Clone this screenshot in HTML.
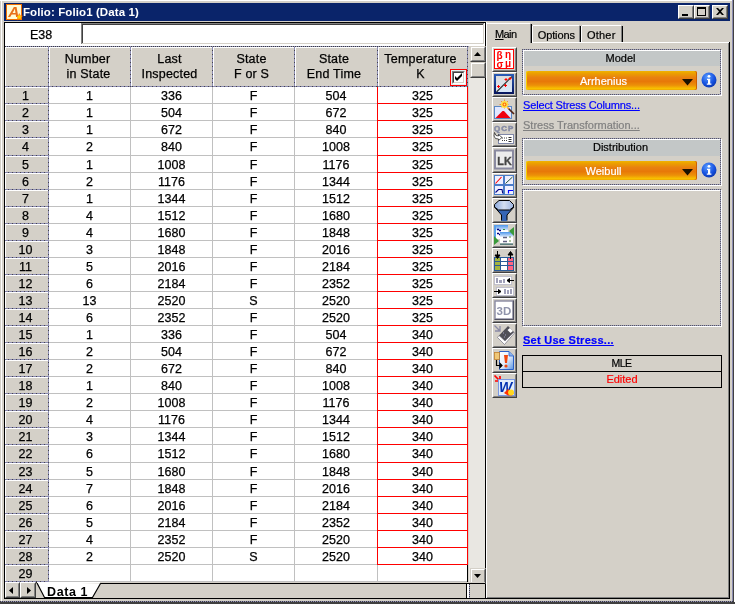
<!DOCTYPE html>
<html><head><meta charset="utf-8"><title>Folio: Folio1 (Data 1)</title>
<style>
html,body{margin:0;padding:0;background:#d4d0c8;}
body{will-change:transform;width:735px;height:604px;position:relative;overflow:hidden;font-family:"Liberation Sans",sans-serif;font-size:12px;color:#000;}
.a{position:absolute;}
.t{position:absolute;white-space:nowrap;text-align:center;}
.g{-webkit-text-stroke:.25px #000;font-size:12.500px;line-height:17px;height:17px;}
.p{font-size:11px;line-height:13px;-webkit-text-stroke-width:.2px}
.h{font-size:12.500px;letter-spacing:.2px}
.btn{position:absolute;width:25px;height:25px;box-sizing:border-box;border:1px solid;border-color:#fff #404040 #404040 #fff;background:#d4d0c8;}
.btn i{position:absolute;left:0;top:0;right:0;bottom:0;border:1px solid;border-color:#d4d0c8 #808080 #808080 #d4d0c8;}
svg{position:absolute;overflow:visible;}
.dh{background:repeating-linear-gradient(90deg,#3c3c44 0,#3c3c44 1px,#9696b8 1px,#9696b8 2px)}
.dh3{background:repeating-linear-gradient(90deg,#585862 0,#585862 1px,#9c9cbc 1px,#9c9cbc 2px)}
.dv3{background:repeating-linear-gradient(180deg,#585862 0,#585862 1px,#9c9cbc 1px,#9c9cbc 2px)}
.dh2{background:repeating-linear-gradient(90deg,#8c8cb2 0,#8c8cb2 3px,#44444c 3px,#44444c 4px)}
.dv2{background:repeating-linear-gradient(180deg,#8c8cb2 0,#8c8cb2 3px,#44444c 3px,#44444c 4px)}
.dv{background:repeating-linear-gradient(180deg,#3c3c44 0,#3c3c44 1px,#9696b8 1px,#9696b8 2px)}
</style></head><body>

<div class="a" style="left:0px;top:0px;width:735px;height:604px;background:#d4d0c8;"></div>
<div class="a" style="left:0px;top:0px;width:735px;height:1px;background:#fff;"></div>
<div class="a" style="left:1px;top:0px;width:1px;height:601px;background:#fff;"></div>
<div class="a" style="left:732px;top:0px;width:1px;height:604px;background:#8c8cb2;"></div>
<div class="a" style="left:733px;top:0px;width:1px;height:604px;background:#404040;"></div>
<div class="a" style="left:734px;top:0px;width:1px;height:602px;background:#fff;"></div>
<div class="a dh" style="left:0px;top:601px;width:733px;height:1px;"></div>
<div class="a" style="left:0px;top:602px;width:735px;height:2px;background:#404040;"></div>
<div class="a" style="left:4px;top:3px;width:726px;height:18px;background:#0a246a;"></div>
<svg style="left:6px;top:4px" width="16" height="16" viewBox="0 0 16 16"><rect x="0.500" y="0.500" width="15" height="15" fill="#fffbd6" stroke="#f07000"/><text x="2.200" y="12.800" font-family="Liberation Sans,sans-serif" font-weight="bold" font-style="italic" font-size="15.500" fill="#e8701a">A</text><path d="M13.300 9.600l1 2.100 2.200.3-1.600 1.600.4 2.300-2-1.100-2 1.100.4-2.300-1.600-1.600 2.200-.3z" fill="#ffd000" stroke="#f05000" stroke-width=".5"/></svg>
<div class="t" style="left:23px;top:4px;text-align:left;font-weight:bold;font-size:11.500px;line-height:16px;color:#fff;letter-spacing:.1px" id="title">Folio: Folio1 (Data 1)</div>
<div class="a" style="left:678px;top:5px;width:16px;height:14px;box-sizing:border-box;background:#d4d0c8;border:1px solid;border-color:#fff #404040 #404040 #fff"><div class="a" style="left:0;top:0;right:0;bottom:0;border:1px solid;border-color:#d4d0c8 #808080 #808080 #d4d0c8"></div><div class="a" style="left:3px;top:8px;width:6px;height:2px;background:#000"></div></div>
<div class="a" style="left:694px;top:5px;width:16px;height:14px;box-sizing:border-box;background:#d4d0c8;border:1px solid;border-color:#fff #404040 #404040 #fff"><div class="a" style="left:0;top:0;right:0;bottom:0;border:1px solid;border-color:#d4d0c8 #808080 #808080 #d4d0c8"></div><div class="a" style="left:2px;top:1px;width:9px;height:9px;box-sizing:border-box;border:1px solid #000;border-top-width:2px"></div></div>
<div class="a" style="left:712px;top:5px;width:16px;height:14px;box-sizing:border-box;background:#d4d0c8;border:1px solid;border-color:#fff #404040 #404040 #fff"><div class="a" style="left:0;top:0;right:0;bottom:0;border:1px solid;border-color:#d4d0c8 #808080 #808080 #d4d0c8"></div><svg style="left:3px;top:2px" width="8" height="7" viewBox="0 0 8 7"><path d="M0 0h2l2 2 2-2h2L5 3.500 8 7H6L4 5 2 7H0l3-3.500z" fill="#000"/></svg></div>
<div class="a" style="left:4px;top:22px;width:482px;height:1px;background:#000;"></div>
<div class="a" style="left:4px;top:22px;width:1px;height:577px;background:#000;"></div>
<div class="a" style="left:485px;top:22px;width:1px;height:577px;background:#000;"></div>
<div class="a" style="left:4px;top:598px;width:726px;height:1px;background:#000;"></div>
<div class="a" style="left:729px;top:42px;width:1px;height:557px;background:#000;"></div>
<div class="a" style="left:728px;top:43px;width:1px;height:555px;background:#808080;"></div>
<div class="a" style="left:486px;top:597px;width:243px;height:1px;background:#808080;"></div>
<div class="a" style="left:486px;top:22px;width:1px;height:576px;background:#fff;"></div>
<div class="a" style="left:5px;top:23px;width:76px;height:22px;background:#fff;"></div>
<div class="t g" style="left:3px;top:27px;width:76px;font-size:12.500px">E38</div>
<div class="a" style="left:81px;top:23px;width:404px;height:22px;background:#fff;"></div>
<div class="a" style="left:81px;top:23px;width:403px;height:1px;background:#808080;"></div>
<div class="a" style="left:81px;top:23px;width:1px;height:21px;background:#808080;"></div>
<div class="a" style="left:82px;top:24px;width:401px;height:1px;background:#404040;"></div>
<div class="a" style="left:82px;top:24px;width:1px;height:19px;background:#404040;"></div>
<div class="a" style="left:82px;top:43px;width:402px;height:1px;background:#d4d0c8;"></div>
<div class="a" style="left:483px;top:24px;width:1px;height:20px;background:#d4d0c8;"></div>
<div class="a" style="left:5px;top:45px;width:480px;height:1px;background:#fff;"></div>
<div class="a" style="left:5px;top:46px;width:462px;height:536px;background:#fff;"></div>
<div class="a" style="left:5px;top:46px;width:465px;height:41px;background:#d4d0c8;"></div>
<div class="a dh" style="left:5px;top:46px;width:465px;height:1px;"></div>
<div class="a dh2" style="left:5px;top:86px;width:463px;height:1px;"></div>
<div class="a" style="left:5px;top:47px;width:43px;height:1px;background:#fff;"></div>
<div class="a" style="left:5px;top:47px;width:1px;height:39px;background:#fff;"></div>
<div class="a dv2" style="left:48px;top:47px;width:1px;height:40px;"></div>
<div class="a" style="left:49px;top:47px;width:81px;height:1px;background:#fff;"></div>
<div class="a" style="left:49px;top:47px;width:1px;height:39px;background:#fff;"></div>
<div class="a dv2" style="left:130px;top:47px;width:1px;height:40px;"></div>
<div class="a" style="left:131px;top:47px;width:81px;height:1px;background:#fff;"></div>
<div class="a" style="left:131px;top:47px;width:1px;height:39px;background:#fff;"></div>
<div class="a dv2" style="left:212px;top:47px;width:1px;height:40px;"></div>
<div class="a" style="left:213px;top:47px;width:81px;height:1px;background:#fff;"></div>
<div class="a" style="left:213px;top:47px;width:1px;height:39px;background:#fff;"></div>
<div class="a dv2" style="left:294px;top:47px;width:1px;height:40px;"></div>
<div class="a" style="left:295px;top:47px;width:82px;height:1px;background:#fff;"></div>
<div class="a" style="left:295px;top:47px;width:1px;height:39px;background:#fff;"></div>
<div class="a dv2" style="left:377px;top:47px;width:1px;height:40px;"></div>
<div class="a" style="left:378px;top:47px;width:89px;height:1px;background:#fff;"></div>
<div class="a" style="left:378px;top:47px;width:1px;height:39px;background:#fff;"></div>
<div class="a dv2" style="left:467px;top:47px;width:1px;height:40px;"></div>
<div class="a" style="left:5px;top:87px;width:43px;height:494px;background:#d4d0c8;"></div>
<div class="a dv2" style="left:48px;top:87px;width:1px;height:495px;"></div>
<div class="a" style="left:5px;top:87px;width:43px;height:1px;background:#fff;"></div>
<div class="a" style="left:5px;top:87px;width:1px;height:16px;background:#fff;"></div>
<div class="a dh2" style="left:5px;top:103px;width:43px;height:1px;"></div>
<div class="a" style="left:5px;top:104px;width:43px;height:1px;background:#fff;"></div>
<div class="a" style="left:5px;top:104px;width:1px;height:16px;background:#fff;"></div>
<div class="a dh2" style="left:5px;top:120px;width:43px;height:1px;"></div>
<div class="a" style="left:5px;top:121px;width:43px;height:1px;background:#fff;"></div>
<div class="a" style="left:5px;top:121px;width:1px;height:16px;background:#fff;"></div>
<div class="a dh2" style="left:5px;top:137px;width:43px;height:1px;"></div>
<div class="a" style="left:5px;top:138px;width:43px;height:1px;background:#fff;"></div>
<div class="a" style="left:5px;top:138px;width:1px;height:17px;background:#fff;"></div>
<div class="a dh2" style="left:5px;top:155px;width:43px;height:1px;"></div>
<div class="a" style="left:5px;top:156px;width:43px;height:1px;background:#fff;"></div>
<div class="a" style="left:5px;top:156px;width:1px;height:16px;background:#fff;"></div>
<div class="a dh2" style="left:5px;top:172px;width:43px;height:1px;"></div>
<div class="a" style="left:5px;top:173px;width:43px;height:1px;background:#fff;"></div>
<div class="a" style="left:5px;top:173px;width:1px;height:16px;background:#fff;"></div>
<div class="a dh2" style="left:5px;top:189px;width:43px;height:1px;"></div>
<div class="a" style="left:5px;top:190px;width:43px;height:1px;background:#fff;"></div>
<div class="a" style="left:5px;top:190px;width:1px;height:16px;background:#fff;"></div>
<div class="a dh2" style="left:5px;top:206px;width:43px;height:1px;"></div>
<div class="a" style="left:5px;top:207px;width:43px;height:1px;background:#fff;"></div>
<div class="a" style="left:5px;top:207px;width:1px;height:16px;background:#fff;"></div>
<div class="a dh2" style="left:5px;top:223px;width:43px;height:1px;"></div>
<div class="a" style="left:5px;top:224px;width:43px;height:1px;background:#fff;"></div>
<div class="a" style="left:5px;top:224px;width:1px;height:16px;background:#fff;"></div>
<div class="a dh2" style="left:5px;top:240px;width:43px;height:1px;"></div>
<div class="a" style="left:5px;top:241px;width:43px;height:1px;background:#fff;"></div>
<div class="a" style="left:5px;top:241px;width:1px;height:16px;background:#fff;"></div>
<div class="a dh2" style="left:5px;top:257px;width:43px;height:1px;"></div>
<div class="a" style="left:5px;top:258px;width:43px;height:1px;background:#fff;"></div>
<div class="a" style="left:5px;top:258px;width:1px;height:16px;background:#fff;"></div>
<div class="a dh2" style="left:5px;top:274px;width:43px;height:1px;"></div>
<div class="a" style="left:5px;top:275px;width:43px;height:1px;background:#fff;"></div>
<div class="a" style="left:5px;top:275px;width:1px;height:16px;background:#fff;"></div>
<div class="a dh2" style="left:5px;top:291px;width:43px;height:1px;"></div>
<div class="a" style="left:5px;top:292px;width:43px;height:1px;background:#fff;"></div>
<div class="a" style="left:5px;top:292px;width:1px;height:16px;background:#fff;"></div>
<div class="a dh2" style="left:5px;top:308px;width:43px;height:1px;"></div>
<div class="a" style="left:5px;top:309px;width:43px;height:1px;background:#fff;"></div>
<div class="a" style="left:5px;top:309px;width:1px;height:16px;background:#fff;"></div>
<div class="a dh2" style="left:5px;top:325px;width:43px;height:1px;"></div>
<div class="a" style="left:5px;top:326px;width:43px;height:1px;background:#fff;"></div>
<div class="a" style="left:5px;top:326px;width:1px;height:16px;background:#fff;"></div>
<div class="a dh2" style="left:5px;top:342px;width:43px;height:1px;"></div>
<div class="a" style="left:5px;top:343px;width:43px;height:1px;background:#fff;"></div>
<div class="a" style="left:5px;top:343px;width:1px;height:16px;background:#fff;"></div>
<div class="a dh2" style="left:5px;top:359px;width:43px;height:1px;"></div>
<div class="a" style="left:5px;top:360px;width:43px;height:1px;background:#fff;"></div>
<div class="a" style="left:5px;top:360px;width:1px;height:16px;background:#fff;"></div>
<div class="a dh2" style="left:5px;top:376px;width:43px;height:1px;"></div>
<div class="a" style="left:5px;top:377px;width:43px;height:1px;background:#fff;"></div>
<div class="a" style="left:5px;top:377px;width:1px;height:16px;background:#fff;"></div>
<div class="a dh2" style="left:5px;top:393px;width:43px;height:1px;"></div>
<div class="a" style="left:5px;top:394px;width:43px;height:1px;background:#fff;"></div>
<div class="a" style="left:5px;top:394px;width:1px;height:16px;background:#fff;"></div>
<div class="a dh2" style="left:5px;top:410px;width:43px;height:1px;"></div>
<div class="a" style="left:5px;top:411px;width:43px;height:1px;background:#fff;"></div>
<div class="a" style="left:5px;top:411px;width:1px;height:16px;background:#fff;"></div>
<div class="a dh2" style="left:5px;top:427px;width:43px;height:1px;"></div>
<div class="a" style="left:5px;top:428px;width:43px;height:1px;background:#fff;"></div>
<div class="a" style="left:5px;top:428px;width:1px;height:16px;background:#fff;"></div>
<div class="a dh2" style="left:5px;top:444px;width:43px;height:1px;"></div>
<div class="a" style="left:5px;top:445px;width:43px;height:1px;background:#fff;"></div>
<div class="a" style="left:5px;top:445px;width:1px;height:17px;background:#fff;"></div>
<div class="a dh2" style="left:5px;top:462px;width:43px;height:1px;"></div>
<div class="a" style="left:5px;top:463px;width:43px;height:1px;background:#fff;"></div>
<div class="a" style="left:5px;top:463px;width:1px;height:16px;background:#fff;"></div>
<div class="a dh2" style="left:5px;top:479px;width:43px;height:1px;"></div>
<div class="a" style="left:5px;top:480px;width:43px;height:1px;background:#fff;"></div>
<div class="a" style="left:5px;top:480px;width:1px;height:16px;background:#fff;"></div>
<div class="a dh2" style="left:5px;top:496px;width:43px;height:1px;"></div>
<div class="a" style="left:5px;top:497px;width:43px;height:1px;background:#fff;"></div>
<div class="a" style="left:5px;top:497px;width:1px;height:16px;background:#fff;"></div>
<div class="a dh2" style="left:5px;top:513px;width:43px;height:1px;"></div>
<div class="a" style="left:5px;top:514px;width:43px;height:1px;background:#fff;"></div>
<div class="a" style="left:5px;top:514px;width:1px;height:16px;background:#fff;"></div>
<div class="a dh2" style="left:5px;top:530px;width:43px;height:1px;"></div>
<div class="a" style="left:5px;top:531px;width:43px;height:1px;background:#fff;"></div>
<div class="a" style="left:5px;top:531px;width:1px;height:16px;background:#fff;"></div>
<div class="a dh2" style="left:5px;top:547px;width:43px;height:1px;"></div>
<div class="a" style="left:5px;top:548px;width:43px;height:1px;background:#fff;"></div>
<div class="a" style="left:5px;top:548px;width:1px;height:16px;background:#fff;"></div>
<div class="a dh2" style="left:5px;top:564px;width:43px;height:1px;"></div>
<div class="a" style="left:5px;top:565px;width:43px;height:1px;background:#fff;"></div>
<div class="a" style="left:5px;top:565px;width:1px;height:16px;background:#fff;"></div>
<div class="a dh2" style="left:5px;top:581px;width:43px;height:1px;"></div>
<div class="a" style="left:49px;top:103px;width:418px;height:1px;background:#c0c0c0;"></div>
<div class="a" style="left:49px;top:120px;width:418px;height:1px;background:#c0c0c0;"></div>
<div class="a" style="left:49px;top:137px;width:418px;height:1px;background:#c0c0c0;"></div>
<div class="a" style="left:49px;top:155px;width:418px;height:1px;background:#c0c0c0;"></div>
<div class="a" style="left:49px;top:172px;width:418px;height:1px;background:#c0c0c0;"></div>
<div class="a" style="left:49px;top:189px;width:418px;height:1px;background:#c0c0c0;"></div>
<div class="a" style="left:49px;top:206px;width:418px;height:1px;background:#c0c0c0;"></div>
<div class="a" style="left:49px;top:223px;width:418px;height:1px;background:#c0c0c0;"></div>
<div class="a" style="left:49px;top:240px;width:418px;height:1px;background:#c0c0c0;"></div>
<div class="a" style="left:49px;top:257px;width:418px;height:1px;background:#c0c0c0;"></div>
<div class="a" style="left:49px;top:274px;width:418px;height:1px;background:#c0c0c0;"></div>
<div class="a" style="left:49px;top:291px;width:418px;height:1px;background:#c0c0c0;"></div>
<div class="a" style="left:49px;top:308px;width:418px;height:1px;background:#c0c0c0;"></div>
<div class="a" style="left:49px;top:325px;width:418px;height:1px;background:#c0c0c0;"></div>
<div class="a" style="left:49px;top:342px;width:418px;height:1px;background:#c0c0c0;"></div>
<div class="a" style="left:49px;top:359px;width:418px;height:1px;background:#c0c0c0;"></div>
<div class="a" style="left:49px;top:376px;width:418px;height:1px;background:#c0c0c0;"></div>
<div class="a" style="left:49px;top:393px;width:418px;height:1px;background:#c0c0c0;"></div>
<div class="a" style="left:49px;top:410px;width:418px;height:1px;background:#c0c0c0;"></div>
<div class="a" style="left:49px;top:427px;width:418px;height:1px;background:#c0c0c0;"></div>
<div class="a" style="left:49px;top:444px;width:418px;height:1px;background:#c0c0c0;"></div>
<div class="a" style="left:49px;top:462px;width:418px;height:1px;background:#c0c0c0;"></div>
<div class="a" style="left:49px;top:479px;width:418px;height:1px;background:#c0c0c0;"></div>
<div class="a" style="left:49px;top:496px;width:418px;height:1px;background:#c0c0c0;"></div>
<div class="a" style="left:49px;top:513px;width:418px;height:1px;background:#c0c0c0;"></div>
<div class="a" style="left:49px;top:530px;width:418px;height:1px;background:#c0c0c0;"></div>
<div class="a" style="left:49px;top:547px;width:418px;height:1px;background:#c0c0c0;"></div>
<div class="a" style="left:49px;top:564px;width:418px;height:1px;background:#c0c0c0;"></div>
<div class="a" style="left:49px;top:581px;width:418px;height:1px;background:#c0c0c0;"></div>
<div class="a" style="left:130px;top:87px;width:1px;height:494px;background:#c0c0c0;"></div>
<div class="a" style="left:212px;top:87px;width:1px;height:494px;background:#c0c0c0;"></div>
<div class="a" style="left:294px;top:87px;width:1px;height:494px;background:#c0c0c0;"></div>
<div class="a" style="left:377px;top:565px;width:1px;height:17px;background:#c0c0c0;"></div>
<div class="a" style="left:467px;top:565px;width:1px;height:19px;background:#000;"></div>
<div class="a" style="left:377px;top:87px;width:1px;height:478px;background:#f00;"></div>
<div class="a" style="left:467px;top:87px;width:1px;height:478px;background:#f00;"></div>
<div class="a" style="left:377px;top:103px;width:91px;height:1px;background:#f00;"></div>
<div class="a" style="left:377px;top:120px;width:91px;height:1px;background:#f00;"></div>
<div class="a" style="left:377px;top:137px;width:91px;height:1px;background:#f00;"></div>
<div class="a" style="left:377px;top:155px;width:91px;height:1px;background:#f00;"></div>
<div class="a" style="left:377px;top:172px;width:91px;height:1px;background:#f00;"></div>
<div class="a" style="left:377px;top:189px;width:91px;height:1px;background:#f00;"></div>
<div class="a" style="left:377px;top:206px;width:91px;height:1px;background:#f00;"></div>
<div class="a" style="left:377px;top:223px;width:91px;height:1px;background:#f00;"></div>
<div class="a" style="left:377px;top:240px;width:91px;height:1px;background:#f00;"></div>
<div class="a" style="left:377px;top:257px;width:91px;height:1px;background:#f00;"></div>
<div class="a" style="left:377px;top:274px;width:91px;height:1px;background:#f00;"></div>
<div class="a" style="left:377px;top:291px;width:91px;height:1px;background:#f00;"></div>
<div class="a" style="left:377px;top:308px;width:91px;height:1px;background:#f00;"></div>
<div class="a" style="left:377px;top:325px;width:91px;height:1px;background:#f00;"></div>
<div class="a" style="left:377px;top:342px;width:91px;height:1px;background:#f00;"></div>
<div class="a" style="left:377px;top:359px;width:91px;height:1px;background:#f00;"></div>
<div class="a" style="left:377px;top:376px;width:91px;height:1px;background:#f00;"></div>
<div class="a" style="left:377px;top:393px;width:91px;height:1px;background:#f00;"></div>
<div class="a" style="left:377px;top:410px;width:91px;height:1px;background:#f00;"></div>
<div class="a" style="left:377px;top:427px;width:91px;height:1px;background:#f00;"></div>
<div class="a" style="left:377px;top:444px;width:91px;height:1px;background:#f00;"></div>
<div class="a" style="left:377px;top:462px;width:91px;height:1px;background:#f00;"></div>
<div class="a" style="left:377px;top:479px;width:91px;height:1px;background:#f00;"></div>
<div class="a" style="left:377px;top:496px;width:91px;height:1px;background:#f00;"></div>
<div class="a" style="left:377px;top:513px;width:91px;height:1px;background:#f00;"></div>
<div class="a" style="left:377px;top:530px;width:91px;height:1px;background:#f00;"></div>
<div class="a" style="left:377px;top:547px;width:91px;height:1px;background:#f00;"></div>
<div class="a" style="left:377px;top:564px;width:91px;height:1px;background:#f00;"></div>
<div class="t g h" style="left:47px;top:51px;width:81px;">Number</div>
<div class="t g h" style="left:48px;top:66px;width:81px;">in State</div>
<div class="t g h" style="left:129px;top:51px;width:81px;">Last</div>
<div class="t g h" style="left:129px;top:66px;width:81px;">Inspected</div>
<div class="t g h" style="left:211px;top:51px;width:81px;">State</div>
<div class="t g h" style="left:211px;top:66px;width:81px;">F or S</div>
<div class="t g h" style="left:293px;top:51px;width:82px;">State</div>
<div class="t g h" style="left:293px;top:66px;width:82px;">End Time</div>
<div class="t g h" style="left:376px;top:51px;width:89px;">Temperature</div>
<div class="t g h" style="left:376px;top:66px;width:89px;">K</div>
<div class="t g" style="left:4px;top:88px;width:43px;">1</div>
<div class="t g" style="left:49px;top:88px;width:81px;">1</div>
<div class="t g" style="left:131px;top:88px;width:81px;">336</div>
<div class="t g" style="left:213px;top:88px;width:81px;">F</div>
<div class="t g" style="left:295px;top:88px;width:82px;">504</div>
<div class="t g" style="left:378px;top:88px;width:89px;">325</div>
<div class="t g" style="left:4px;top:105px;width:43px;">2</div>
<div class="t g" style="left:49px;top:105px;width:81px;">1</div>
<div class="t g" style="left:131px;top:105px;width:81px;">504</div>
<div class="t g" style="left:213px;top:105px;width:81px;">F</div>
<div class="t g" style="left:295px;top:105px;width:82px;">672</div>
<div class="t g" style="left:378px;top:105px;width:89px;">325</div>
<div class="t g" style="left:4px;top:122px;width:43px;">3</div>
<div class="t g" style="left:49px;top:122px;width:81px;">1</div>
<div class="t g" style="left:131px;top:122px;width:81px;">672</div>
<div class="t g" style="left:213px;top:122px;width:81px;">F</div>
<div class="t g" style="left:295px;top:122px;width:82px;">840</div>
<div class="t g" style="left:378px;top:122px;width:89px;">325</div>
<div class="t g" style="left:4px;top:139px;width:43px;">4</div>
<div class="t g" style="left:49px;top:139px;width:81px;">2</div>
<div class="t g" style="left:131px;top:139px;width:81px;">840</div>
<div class="t g" style="left:213px;top:139px;width:81px;">F</div>
<div class="t g" style="left:295px;top:139px;width:82px;">1008</div>
<div class="t g" style="left:378px;top:139px;width:89px;">325</div>
<div class="t g" style="left:4px;top:157px;width:43px;">5</div>
<div class="t g" style="left:49px;top:157px;width:81px;">1</div>
<div class="t g" style="left:131px;top:157px;width:81px;">1008</div>
<div class="t g" style="left:213px;top:157px;width:81px;">F</div>
<div class="t g" style="left:295px;top:157px;width:82px;">1176</div>
<div class="t g" style="left:378px;top:157px;width:89px;">325</div>
<div class="t g" style="left:4px;top:174px;width:43px;">6</div>
<div class="t g" style="left:49px;top:174px;width:81px;">2</div>
<div class="t g" style="left:131px;top:174px;width:81px;">1176</div>
<div class="t g" style="left:213px;top:174px;width:81px;">F</div>
<div class="t g" style="left:295px;top:174px;width:82px;">1344</div>
<div class="t g" style="left:378px;top:174px;width:89px;">325</div>
<div class="t g" style="left:4px;top:191px;width:43px;">7</div>
<div class="t g" style="left:49px;top:191px;width:81px;">1</div>
<div class="t g" style="left:131px;top:191px;width:81px;">1344</div>
<div class="t g" style="left:213px;top:191px;width:81px;">F</div>
<div class="t g" style="left:295px;top:191px;width:82px;">1512</div>
<div class="t g" style="left:378px;top:191px;width:89px;">325</div>
<div class="t g" style="left:4px;top:208px;width:43px;">8</div>
<div class="t g" style="left:49px;top:208px;width:81px;">4</div>
<div class="t g" style="left:131px;top:208px;width:81px;">1512</div>
<div class="t g" style="left:213px;top:208px;width:81px;">F</div>
<div class="t g" style="left:295px;top:208px;width:82px;">1680</div>
<div class="t g" style="left:378px;top:208px;width:89px;">325</div>
<div class="t g" style="left:4px;top:225px;width:43px;">9</div>
<div class="t g" style="left:49px;top:225px;width:81px;">4</div>
<div class="t g" style="left:131px;top:225px;width:81px;">1680</div>
<div class="t g" style="left:213px;top:225px;width:81px;">F</div>
<div class="t g" style="left:295px;top:225px;width:82px;">1848</div>
<div class="t g" style="left:378px;top:225px;width:89px;">325</div>
<div class="t g" style="left:4px;top:242px;width:43px;">10</div>
<div class="t g" style="left:49px;top:242px;width:81px;">3</div>
<div class="t g" style="left:131px;top:242px;width:81px;">1848</div>
<div class="t g" style="left:213px;top:242px;width:81px;">F</div>
<div class="t g" style="left:295px;top:242px;width:82px;">2016</div>
<div class="t g" style="left:378px;top:242px;width:89px;">325</div>
<div class="t g" style="left:4px;top:259px;width:43px;">11</div>
<div class="t g" style="left:49px;top:259px;width:81px;">5</div>
<div class="t g" style="left:131px;top:259px;width:81px;">2016</div>
<div class="t g" style="left:213px;top:259px;width:81px;">F</div>
<div class="t g" style="left:295px;top:259px;width:82px;">2184</div>
<div class="t g" style="left:378px;top:259px;width:89px;">325</div>
<div class="t g" style="left:4px;top:276px;width:43px;">12</div>
<div class="t g" style="left:49px;top:276px;width:81px;">6</div>
<div class="t g" style="left:131px;top:276px;width:81px;">2184</div>
<div class="t g" style="left:213px;top:276px;width:81px;">F</div>
<div class="t g" style="left:295px;top:276px;width:82px;">2352</div>
<div class="t g" style="left:378px;top:276px;width:89px;">325</div>
<div class="t g" style="left:4px;top:293px;width:43px;">13</div>
<div class="t g" style="left:49px;top:293px;width:81px;">13</div>
<div class="t g" style="left:131px;top:293px;width:81px;">2520</div>
<div class="t g" style="left:213px;top:293px;width:81px;">S</div>
<div class="t g" style="left:295px;top:293px;width:82px;">2520</div>
<div class="t g" style="left:378px;top:293px;width:89px;">325</div>
<div class="t g" style="left:4px;top:310px;width:43px;">14</div>
<div class="t g" style="left:49px;top:310px;width:81px;">6</div>
<div class="t g" style="left:131px;top:310px;width:81px;">2352</div>
<div class="t g" style="left:213px;top:310px;width:81px;">F</div>
<div class="t g" style="left:295px;top:310px;width:82px;">2520</div>
<div class="t g" style="left:378px;top:310px;width:89px;">325</div>
<div class="t g" style="left:4px;top:327px;width:43px;">15</div>
<div class="t g" style="left:49px;top:327px;width:81px;">1</div>
<div class="t g" style="left:131px;top:327px;width:81px;">336</div>
<div class="t g" style="left:213px;top:327px;width:81px;">F</div>
<div class="t g" style="left:295px;top:327px;width:82px;">504</div>
<div class="t g" style="left:378px;top:327px;width:89px;">340</div>
<div class="t g" style="left:4px;top:344px;width:43px;">16</div>
<div class="t g" style="left:49px;top:344px;width:81px;">2</div>
<div class="t g" style="left:131px;top:344px;width:81px;">504</div>
<div class="t g" style="left:213px;top:344px;width:81px;">F</div>
<div class="t g" style="left:295px;top:344px;width:82px;">672</div>
<div class="t g" style="left:378px;top:344px;width:89px;">340</div>
<div class="t g" style="left:4px;top:361px;width:43px;">17</div>
<div class="t g" style="left:49px;top:361px;width:81px;">2</div>
<div class="t g" style="left:131px;top:361px;width:81px;">672</div>
<div class="t g" style="left:213px;top:361px;width:81px;">F</div>
<div class="t g" style="left:295px;top:361px;width:82px;">840</div>
<div class="t g" style="left:378px;top:361px;width:89px;">340</div>
<div class="t g" style="left:4px;top:378px;width:43px;">18</div>
<div class="t g" style="left:49px;top:378px;width:81px;">1</div>
<div class="t g" style="left:131px;top:378px;width:81px;">840</div>
<div class="t g" style="left:213px;top:378px;width:81px;">F</div>
<div class="t g" style="left:295px;top:378px;width:82px;">1008</div>
<div class="t g" style="left:378px;top:378px;width:89px;">340</div>
<div class="t g" style="left:4px;top:395px;width:43px;">19</div>
<div class="t g" style="left:49px;top:395px;width:81px;">2</div>
<div class="t g" style="left:131px;top:395px;width:81px;">1008</div>
<div class="t g" style="left:213px;top:395px;width:81px;">F</div>
<div class="t g" style="left:295px;top:395px;width:82px;">1176</div>
<div class="t g" style="left:378px;top:395px;width:89px;">340</div>
<div class="t g" style="left:4px;top:412px;width:43px;">20</div>
<div class="t g" style="left:49px;top:412px;width:81px;">4</div>
<div class="t g" style="left:131px;top:412px;width:81px;">1176</div>
<div class="t g" style="left:213px;top:412px;width:81px;">F</div>
<div class="t g" style="left:295px;top:412px;width:82px;">1344</div>
<div class="t g" style="left:378px;top:412px;width:89px;">340</div>
<div class="t g" style="left:4px;top:429px;width:43px;">21</div>
<div class="t g" style="left:49px;top:429px;width:81px;">3</div>
<div class="t g" style="left:131px;top:429px;width:81px;">1344</div>
<div class="t g" style="left:213px;top:429px;width:81px;">F</div>
<div class="t g" style="left:295px;top:429px;width:82px;">1512</div>
<div class="t g" style="left:378px;top:429px;width:89px;">340</div>
<div class="t g" style="left:4px;top:446px;width:43px;">22</div>
<div class="t g" style="left:49px;top:446px;width:81px;">6</div>
<div class="t g" style="left:131px;top:446px;width:81px;">1512</div>
<div class="t g" style="left:213px;top:446px;width:81px;">F</div>
<div class="t g" style="left:295px;top:446px;width:82px;">1680</div>
<div class="t g" style="left:378px;top:446px;width:89px;">340</div>
<div class="t g" style="left:4px;top:464px;width:43px;">23</div>
<div class="t g" style="left:49px;top:464px;width:81px;">5</div>
<div class="t g" style="left:131px;top:464px;width:81px;">1680</div>
<div class="t g" style="left:213px;top:464px;width:81px;">F</div>
<div class="t g" style="left:295px;top:464px;width:82px;">1848</div>
<div class="t g" style="left:378px;top:464px;width:89px;">340</div>
<div class="t g" style="left:4px;top:481px;width:43px;">24</div>
<div class="t g" style="left:49px;top:481px;width:81px;">7</div>
<div class="t g" style="left:131px;top:481px;width:81px;">1848</div>
<div class="t g" style="left:213px;top:481px;width:81px;">F</div>
<div class="t g" style="left:295px;top:481px;width:82px;">2016</div>
<div class="t g" style="left:378px;top:481px;width:89px;">340</div>
<div class="t g" style="left:4px;top:498px;width:43px;">25</div>
<div class="t g" style="left:49px;top:498px;width:81px;">6</div>
<div class="t g" style="left:131px;top:498px;width:81px;">2016</div>
<div class="t g" style="left:213px;top:498px;width:81px;">F</div>
<div class="t g" style="left:295px;top:498px;width:82px;">2184</div>
<div class="t g" style="left:378px;top:498px;width:89px;">340</div>
<div class="t g" style="left:4px;top:515px;width:43px;">26</div>
<div class="t g" style="left:49px;top:515px;width:81px;">5</div>
<div class="t g" style="left:131px;top:515px;width:81px;">2184</div>
<div class="t g" style="left:213px;top:515px;width:81px;">F</div>
<div class="t g" style="left:295px;top:515px;width:82px;">2352</div>
<div class="t g" style="left:378px;top:515px;width:89px;">340</div>
<div class="t g" style="left:4px;top:532px;width:43px;">27</div>
<div class="t g" style="left:49px;top:532px;width:81px;">4</div>
<div class="t g" style="left:131px;top:532px;width:81px;">2352</div>
<div class="t g" style="left:213px;top:532px;width:81px;">F</div>
<div class="t g" style="left:295px;top:532px;width:82px;">2520</div>
<div class="t g" style="left:378px;top:532px;width:89px;">340</div>
<div class="t g" style="left:4px;top:549px;width:43px;">28</div>
<div class="t g" style="left:49px;top:549px;width:81px;">2</div>
<div class="t g" style="left:131px;top:549px;width:81px;">2520</div>
<div class="t g" style="left:213px;top:549px;width:81px;">S</div>
<div class="t g" style="left:295px;top:549px;width:82px;">2520</div>
<div class="t g" style="left:378px;top:549px;width:89px;">340</div>
<div class="t g" style="left:4px;top:566px;width:43px;">29</div>
<div class="a" style="left:450px;top:69px;width:17px;height:17px;background:#f00;"></div>
<div class="a" style="left:451px;top:70px;width:15px;height:15px;background:#e4f0f0;"></div>
<div class="a" style="left:452px;top:71px;width:13px;height:13px;background:#fff;box-sizing:border-box;border:1px solid;border-color:#808080 #fff #fff #808080"></div>
<div class="a" style="left:453px;top:72px;width:11px;height:11px;background:#fff;box-sizing:border-box;border:1px solid;border-color:#404040 #d4d0c8 #d4d0c8 #404040"></div>
<svg style="left:455px;top:74px" width="7" height="7" viewBox="0 0 7 7"><path d="M0 2v3l2 2 5-5V-1L2 4z" fill="#000"/></svg>
<div class="a" style="left:468px;top:87px;width:1px;height:496px;background:#d4d0c8;"></div>
<div class="a" style="left:469px;top:46px;width:16px;height:537px;background:#e9e7e2;"></div>
<div class="a" style="left:469px;top:46px;width:1px;height:32px;background:#d4d0c8;"></div>
<div class="a" style="left:470px;top:46px;width:16px;height:16px;box-sizing:border-box;background:#d4d0c8;border:1px solid;border-color:#d4d0c8 #404040 #404040 #d4d0c8"><div class="a" style="left:0;top:0;right:0;bottom:0;border:1px solid;border-color:#fff #808080 #808080 #fff"></div><svg style="left:3px;top:5px" width="7" height="4" viewBox="0 0 7 4"><path d="M3.500 0L7 4H0z" fill="#000"/></svg></div>
<div class="a" style="left:470px;top:62px;width:16px;height:16px;box-sizing:border-box;background:#d4d0c8;border:1px solid;border-color:#d4d0c8 #404040 #404040 #d4d0c8"><div class="a" style="left:0;top:0;right:0;bottom:0;border:1px solid;border-color:#fff #808080 #808080 #fff"></div></div>
<div class="a" style="left:470px;top:568px;width:16px;height:16px;box-sizing:border-box;background:#d4d0c8;border:1px solid;border-color:#d4d0c8 #404040 #404040 #d4d0c8"><div class="a" style="left:0;top:0;right:0;bottom:0;border:1px solid;border-color:#fff #808080 #808080 #fff"></div><svg style="left:3px;top:5px" width="7" height="4" viewBox="0 0 7 4"><path d="M0 0h7L3.500 4z" fill="#000"/></svg></div>
<div class="a" style="left:5px;top:582px;width:480px;height:16px;background:#d4d0c8;"></div>
<div class="a" style="left:100px;top:583px;width:385px;height:1px;background:#000;"></div>
<div class="a" style="left:5px;top:582px;width:15px;height:16px;box-sizing:border-box;background:#d4d0c8;border:1px solid;border-color:#fff #404040 #404040 #fff"><div class="a" style="left:0;top:0;right:0;bottom:0;border:1px solid;border-color:#d4d0c8 #808080 #808080 #d4d0c8"></div><svg style="left:3px;top:4px" width="4" height="7" viewBox="0 0 4 7"><path d="M4 0v7L0 3.500z" fill="#000"/></svg></div>
<div class="a" style="left:20px;top:582px;width:16px;height:16px;box-sizing:border-box;background:#d4d0c8;border:1px solid;border-color:#fff #404040 #404040 #fff"><div class="a" style="left:0;top:0;right:0;bottom:0;border:1px solid;border-color:#d4d0c8 #808080 #808080 #d4d0c8"></div><svg style="left:6px;top:4px" width="4" height="7" viewBox="0 0 4 7"><path d="M0 0v7l4-3.500z" fill="#000"/></svg></div>
<svg style="left:36px;top:582px" width="70" height="17" viewBox="0 0 70 17"><path d="M0.500 0L8.500 15.500H56.500L64.500 1.500" fill="#fff" stroke="none"/><path d="M0.500 0L8.500 15.500H56.500L64.500 1.500" fill="none" stroke="#000" stroke-width="1.200"/></svg>
<div class="a" style="left:37px;top:582px;width:63px;height:1px;background:#fff;"></div>
<div class="t" style="left:47px;top:584px;text-align:left;font-weight:bold;font-size:12.500px;line-height:16px;letter-spacing:.6px" id="sheettab">Data 1</div>
<div class="a" style="left:466px;top:584px;width:1px;height:14px;background:#000;"></div>
<div class="a" style="left:467px;top:584px;width:2px;height:14px;background:#fff;"></div>
<div class="a dv" style="left:469px;top:584px;width:1px;height:14px;"></div>
<div class="a" style="left:487px;top:42px;width:242px;height:1px;background:#fff;"></div>
<div class="a" style="left:487px;top:23px;width:44px;height:20px;background:#d4d0c8;"></div>
<div class="a" style="left:487px;top:23px;width:43px;height:1px;background:#fff;"></div>
<div class="a" style="left:530px;top:24px;width:1px;height:19px;background:#808080;"></div>
<div class="a" style="left:531px;top:24px;width:1px;height:19px;background:#000;"></div>
<div class="t p" style="left:495px;top:28px;text-align:left;letter-spacing:-.6px" id="tmain"><span style="text-decoration:underline">M</span>ain</div>
<div class="a" style="left:533px;top:25px;width:46px;height:1px;background:#fff;"></div>
<div class="a" style="left:532px;top:26px;width:1px;height:16px;background:#fff;"></div>
<div class="a" style="left:579px;top:26px;width:1px;height:16px;background:#808080;"></div>
<div class="a" style="left:580px;top:26px;width:1px;height:16px;background:#000;"></div>
<div class="t p" style="left:537.700px;top:29px;text-align:left;letter-spacing:-.1px" id="topt">Options</div>
<div class="a" style="left:582px;top:25px;width:39px;height:1px;background:#fff;"></div>
<div class="a" style="left:581px;top:26px;width:1px;height:16px;background:#fff;"></div>
<div class="a" style="left:621px;top:26px;width:1px;height:16px;background:#808080;"></div>
<div class="a" style="left:622px;top:26px;width:1px;height:16px;background:#000;"></div>
<div class="t p" style="left:587px;top:29px;text-align:left;letter-spacing:.2px" id="toth">Other</div>
<div class="btn" style="left:492px;top:47px;height:25px"><i></i><svg style="left:0;top:0" width="22" height="22" viewBox="0 0 22 22"><rect x="1.500" y="1.500" width="19" height="19" fill="#fff" stroke="#f00"/><text x="3.500" y="10.500" font-family="Liberation Sans,sans-serif" font-size="10" font-weight="bold" fill="#f00">β</text><text x="12" y="10" font-family="Liberation Sans,sans-serif" font-size="10" font-weight="bold" fill="#f00">η</text><text x="3.500" y="19.500" font-family="Liberation Sans,sans-serif" font-size="10" font-weight="bold" fill="#f00">σ</text><text x="12" y="19" font-family="Liberation Sans,sans-serif" font-size="10" font-weight="bold" fill="#f00">μ</text></svg></div>
<div class="btn" style="left:492px;top:72px;height:25px"><i></i><svg style="left:0;top:0" width="22" height="22" viewBox="0 0 22 22"><defs><linearGradient id="g2" x1="0" y1="0" x2="0" y2="1"><stop offset="0" stop-color="#2a5cb8"/><stop offset="1" stop-color="#06145c"/></linearGradient><linearGradient id="g2b" x1="0" y1="0" x2="0" y2="1"><stop offset="0" stop-color="#dcdcdc"/><stop offset="1" stop-color="#d8e8fa"/></linearGradient></defs><rect x="1" y="1" width="20" height="20" fill="url(#g2)"/><rect x="3" y="3" width="16" height="16" fill="url(#g2b)"/><path d="M3.500 19L19 3.500" stroke="#303030" stroke-width="1.200"/><path d="M11.500 6.500h3M13 5v3M15.500 5.500h3M17 4v3M4 13.500h3M5.500 12v3M11 12.500h3M12.500 11v3" stroke="#f00" stroke-width="1"/></svg></div>
<div class="btn" style="left:492px;top:97px;height:25px"><i></i><svg style="left:0;top:0" width="22" height="22" viewBox="0 0 22 22"><rect x="1.500" y="8.500" width="17" height="12" fill="#e2e8ff" stroke="#5a86c4"/><path d="M2.500 20L9.500 13h1.500L17.500 20z" fill="#f00010"/><path d="M11.500 1.500v10M6.500 6.500h10M8 3l7 7M15 3l-7 7" stroke="#f08020" stroke-width=".8" stroke-dasharray="1.500 1"/><circle cx="11.500" cy="6.500" r="3.500" fill="#ffe040"/><circle cx="11.500" cy="6.500" r="2" fill="#ff6a00"/><circle cx="11.500" cy="6.500" r=".9" fill="#ffe880"/><path d="M15.500 10.500l5.500 5.500" stroke="#502010" stroke-width="1.600"/><path d="M14.500 9.500l1.200 1.200" stroke="#ff9000" stroke-width="1.600"/></svg></div>
<div class="btn" style="left:492px;top:122px;height:25px"><i></i><svg style="left:0;top:0" width="22" height="22" viewBox="0 0 22 22"><text x="1" y="8.200" font-family="Liberation Sans,sans-serif" font-size="8" font-weight="bold" fill="#848aa4" stroke="#848aa4" stroke-width=".5" letter-spacing="1">QCP</text><rect x="5.500" y="11.500" width="15" height="9" fill="#fff" stroke="#8088a8"/><path d="M9 15h1M11 15h1M13 15h1M9 17.500h1M11 17.500h1M13 17.500h1" stroke="#404040" stroke-width="1"/><path d="M15.500 14.500h3M15.500 16.500h3M15.500 18.500h3" stroke="#303030" stroke-width="1"/><path d="M1.500 9.500l1.500 3 2.500.5v-1.500l3.500 3-3.500 3v-1.500l-3-.5-1.500-2.500z" fill="#fff" stroke="#303030" stroke-width=".8"/></svg></div>
<div class="btn" style="left:492px;top:147px;height:26px"><i></i><svg style="left:0;top:0" width="22" height="24" viewBox="0 0 22 24"><rect x="2" y="2.500" width="18" height="18" fill="#ececec" stroke="#8a8aa0" stroke-width="2"/><text x="4.300" y="16.600" font-family="Liberation Sans,sans-serif" font-size="10.800" font-weight="bold" fill="#444" stroke="#444" stroke-width=".3">LK</text></svg></div>
<div class="btn" style="left:492px;top:173px;height:25px"><i></i><svg style="left:0;top:0" width="22" height="22" viewBox="0 0 22 22"><rect x="1.500" y="1.500" width="19" height="19" fill="#eef0ff" stroke="#4a7cc8"/><path d="M11 1v20M1 11h20" stroke="#4a7cc8" stroke-width="2"/><path d="M2.500 9.500L8.500 3" stroke="#f00" stroke-width="1.100"/><path d="M12.500 9.500L19.500 3" stroke="#205030" stroke-width="1"/><path d="M2.500 18.500L5.500 15.500h3.500l.8 4" stroke="#000080" stroke-width="1.100" fill="none"/><path d="M15.500 19.500v-3h4.500" stroke="#0000ff" stroke-width="1.200" fill="none"/></svg></div>
<div class="btn" style="left:492px;top:198px;height:25px"><i></i><svg style="left:0;top:0" width="22" height="22" viewBox="0 0 22 22"><defs><linearGradient id="g7" x1="0" y1="0" x2="1" y2="0"><stop offset="0" stop-color="#8aa8dc"/><stop offset=".5" stop-color="#d4def0"/><stop offset="1" stop-color="#9cb4e0"/></linearGradient></defs><path d="M1.500 8l7 8v5.500h5.500V16l7-8z" fill="#3565b5" stroke="#000" stroke-width="1"/><path d="M8.500 21.500h5.500" stroke="#3565b5" stroke-width="1.200"/><path d="M1.500 5.500L6 1.500h10.500L20.500 5.500v2.500L16.500 11h-11L1.500 8z" fill="url(#g7)" stroke="#000" stroke-width="1"/></svg></div>
<div class="btn" style="left:492px;top:223px;height:25px"><i></i><svg style="left:0;top:0" width="22" height="22" viewBox="0 0 22 22"><defs><linearGradient id="g8" x1="0" y1="0" x2="0" y2="1"><stop offset="0" stop-color="#4a94ea"/><stop offset=".35" stop-color="#cfe2fa"/><stop offset=".4" stop-color="#fff"/></linearGradient></defs><rect x="1" y="1" width="14" height="14" fill="url(#g8)"/><rect x="1" y="1" width="2" height="14" fill="#5aa0ea"/><path d="M4 5.500h2M6 6.500h2M4 9.500h2M6 10.500h2" stroke="#000080" stroke-width="1.300"/><path d="M10 5.500h2" stroke="#309040"/><rect x="7" y="8" width="13" height="12.500" fill="url(#g8)"/><rect x="7" y="19.500" width="13" height="1.200" fill="#205050"/><path d="M10 13.500h4M10 17.500h4" stroke="#606080" stroke-width="1.300"/><path d="M16 13h2M16 17h2" stroke="#609040"/><path d="M21 3v9l-5-5z" fill="#3a9a3a"/><path d="M1 12v9l5-4z" fill="#3a9a3a"/></svg></div>
<div class="btn" style="left:492px;top:248px;height:25px"><i></i><svg style="left:0;top:0" width="22" height="22" viewBox="0 0 22 22"><rect x="1.500" y="8.500" width="19" height="13" fill="#fff" stroke="#2a5a98"/><rect x="2" y="9" width="5" height="12" fill="#a4b440"/><rect x="15" y="9" width="5" height="12" fill="#ff6482"/><path d="M7.500 8v13M14.500 8v13M1 12.500h20M1 16.500h20" stroke="#2a5a98" stroke-width="1"/><path d="M4.500 2v7M2 6l2.500 3.500L7 6z" stroke="#000" fill="#000" stroke-width="1"/><path d="M17.500 10V3M15 6l2.500-3.500L20 6z" stroke="#000" fill="#000" stroke-width="1"/></svg></div>
<div class="btn" style="left:492px;top:273px;height:25px"><i></i><svg style="left:0;top:0" width="22" height="22" viewBox="0 0 22 22"><rect x="1.500" y="2.500" width="17" height="8" fill="#fff" stroke="#9a9ab8" stroke-dasharray="1 1"/><path d="M3 4h2v5h-2zM6 6h3v3h-3zM10 5h2v4h-2z" fill="#a0a0b8"/><path d="M14 6.500h7M14 6.500l2.500-2v4z" stroke="#000" fill="#000" stroke-width="1"/><rect x="3.500" y="13.500" width="17" height="8" fill="#fff" stroke="#9a9ab8" stroke-dasharray="1 1"/><path d="M11 15h2v5h-2zM14 16h2v4h-2zM17 15h2v5h-2z" fill="#a0a0b8"/><path d="M1 17.500h7M8 17.500l-2.500-2v4z" stroke="#000" fill="#000" stroke-width="1"/></svg></div>
<div class="btn" style="left:492px;top:298px;height:25px"><i></i><svg style="left:0;top:0" width="22" height="22" viewBox="0 0 22 22"><rect x="2" y="2" width="18" height="18" fill="#fff" stroke="#8888a0" stroke-width="1.400"/><path d="M1.500 20.500h19V1.500" stroke="#505060" stroke-width="1.200" fill="none"/><text x="3.500" y="16" font-family="Liberation Sans,sans-serif" font-size="11.500" font-weight="bold" fill="#9094ac">3D</text></svg></div>
<div class="btn" style="left:492px;top:323px;height:25px"><i></i><svg style="left:0;top:0" width="22" height="22" viewBox="0 0 22 22"><path d="M1.500 1.500l5 5M7 2v5H2" stroke="#8a8aa6" stroke-width="1.300" fill="none"/><path d="M15 2l6 6-9 9-6-5.500z" fill="#505058"/><path d="M6 11.500l6 5.500 9-9v1.500l-9.500 11-7-7z" fill="#fff" stroke="#606070" stroke-width=".6"/><path d="M14.500 6l2.500-2 3 3-2.500 2z" fill="#fff"/><path d="M10 9h1M12 11h1M11 13h1" stroke="#a0a0c0"/></svg></div>
<div class="btn" style="left:492px;top:348px;height:25px"><i></i><svg style="left:0;top:0" width="22" height="22" viewBox="0 0 22 22"><defs><linearGradient id="g13" x1="0" y1="0" x2="1" y2="1"><stop offset="0" stop-color="#fff"/><stop offset=".5" stop-color="#e6f0fc"/><stop offset="1" stop-color="#5a94e0"/></linearGradient></defs><path d="M6.500 2.500H16L20.500 7v13.500h-14z" fill="url(#g13)" stroke="#2a60c8" stroke-width="1"/><path d="M16 2.500V7h4.500" fill="#8ab4f0" stroke="#2a60c8" stroke-width=".8"/><path d="M11 6h4l-1 8h-2z" fill="#f04810"/><circle cx="13" cy="17" r="1.600" fill="#f04810"/><rect x="1.500" y="3.500" width="5" height="7" fill="#f0c878" stroke="#c08030" stroke-width=".8"/><path d="M3.500 11v5.500h5M7 14.500l2 2-2 2z" stroke="#000" fill="none" stroke-width="1.200"/></svg></div>
<div class="btn" style="left:492px;top:373px;height:25px"><i></i><svg style="left:0;top:0" width="22" height="22" viewBox="0 0 22 22"><path d="M1.500 1.500l5 5M7 2v5H2" stroke="#f00" stroke-width="1.700" fill="none"/><rect x="5.500" y="5.500" width="16" height="16" fill="#e2eefa" stroke="#7a98e4"/><text x="6" y="18" font-family="Liberation Sans,sans-serif" font-size="14" font-weight="bold" font-style="italic" fill="#0030b0">W</text><path d="M11 19l4-4 2 2 2-1 2 3-2 2.500h-4z" fill="#ff3000"/><circle cx="18" cy="18.500" r="3" fill="#ffd820"/></svg></div>
<div class="a" style="left:523px;top:50px;width:199px;height:46px;background:transparent;box-sizing:border-box;border:1px solid #fff;"></div>
<div class="a dh3" style="left:522px;top:49px;width:199px;height:1px;"></div>
<div class="a dh3" style="left:522px;top:94px;width:199px;height:1px;"></div>
<div class="a dv3" style="left:522px;top:49px;width:1px;height:46px;"></div>
<div class="a dv3" style="left:720px;top:49px;width:1px;height:46px;"></div>
<div class="a" style="left:524px;top:51px;width:196px;height:15px;background:#c3c7c7;"></div>
<div class="t p" id="lmodel" style="left:522.500px;top:52px;width:196px">Model</div>
<div class="a" style="left:526px;top:71px;width:171px;height:19px;border-radius:2px;background:linear-gradient(to bottom,#f0b400 0%,#eca000 12%,#e88010 35%,#e87808 55%,#ec9008 75%,#f8c000 92%,#f0a800 100%);box-shadow:inset 1px 0 0 #f8d000,inset -1px 0 0 #d06000"></div>
<div class="t p" id="arr" style="left:526px;top:75px;width:155px;color:#fff">Arrhenius</div>
<svg style="left:682px;top:79px" width="11" height="7" viewBox="0 0 11 7"><path d="M0 0h11L5.500 6.500z" fill="#1a1000"/></svg>
<svg style="left:701px;top:72px" width="16" height="16" viewBox="0 0 16 16"><defs><radialGradient id="gi80" cx=".4" cy=".3" r=".8"><stop offset="0" stop-color="#5a9cff"/><stop offset=".6" stop-color="#1450e0"/><stop offset="1" stop-color="#0830a0"/></radialGradient></defs><circle cx="8" cy="8" r="7.500" fill="url(#gi80)"/><circle cx="8" cy="4.300" r="1.400" fill="#fff"/><path d="M6 6.800h3.200v4.700h1.200v1.200H5.800v-1.200H7V8H6z" fill="#fff"/></svg>
<div class="t p" id="lnk1" style="left:523px;top:99px;text-align:left;color:#00f;text-decoration:underline;letter-spacing:-.15px">Select Stress Columns...</div>
<div class="t p" id="lnk2" style="left:523px;top:119px;text-align:left;color:#808080;text-decoration:underline">Stress Transformation...</div>
<div class="a" style="left:523px;top:139px;width:199px;height:47px;background:transparent;box-sizing:border-box;border:1px solid #fff;"></div>
<div class="a dh3" style="left:522px;top:138px;width:199px;height:1px;"></div>
<div class="a dh3" style="left:522px;top:184px;width:199px;height:1px;"></div>
<div class="a dv3" style="left:522px;top:138px;width:1px;height:47px;"></div>
<div class="a dv3" style="left:720px;top:138px;width:1px;height:47px;"></div>
<div class="a" style="left:524px;top:140px;width:196px;height:16px;background:#c3c7c7;"></div>
<div class="t p" id="ldist" style="left:522.500px;top:141px;width:196px">Distribution</div>
<div class="a" style="left:526px;top:161px;width:171px;height:19px;border-radius:2px;background:linear-gradient(to bottom,#f0b400 0%,#eca000 12%,#e88010 35%,#e87808 55%,#ec9008 75%,#f8c000 92%,#f0a800 100%);box-shadow:inset 1px 0 0 #f8d000,inset -1px 0 0 #d06000"></div>
<div class="t p" id="wei" style="left:526px;top:165px;width:155px;color:#fff">Weibull</div>
<svg style="left:682px;top:169px" width="11" height="7" viewBox="0 0 11 7"><path d="M0 0h11L5.500 6.500z" fill="#1a1000"/></svg>
<svg style="left:701px;top:162px" width="16" height="16" viewBox="0 0 16 16"><defs><radialGradient id="gi170" cx=".4" cy=".3" r=".8"><stop offset="0" stop-color="#5a9cff"/><stop offset=".6" stop-color="#1450e0"/><stop offset="1" stop-color="#0830a0"/></radialGradient></defs><circle cx="8" cy="8" r="7.500" fill="url(#gi170)"/><circle cx="8" cy="4.300" r="1.400" fill="#fff"/><path d="M6 6.800h3.200v4.700h1.200v1.200H5.800v-1.200H7V8H6z" fill="#fff"/></svg>
<div class="a" style="left:523px;top:190px;width:199px;height:137px;background:transparent;box-sizing:border-box;border:1px solid #fff;"></div>
<div class="a dh3" style="left:522px;top:189px;width:199px;height:1px;"></div>
<div class="a dh3" style="left:522px;top:325px;width:199px;height:1px;"></div>
<div class="a dv3" style="left:522px;top:189px;width:1px;height:137px;"></div>
<div class="a dv3" style="left:720px;top:189px;width:1px;height:137px;"></div>
<div class="t p" id="lnk3" style="left:523px;top:334px;text-align:left;color:#00f;text-decoration:underline;font-weight:bold;letter-spacing:.27px">Set Use Stress...</div>
<div class="a" style="left:522px;top:355px;width:200px;height:33px;background:transparent;box-sizing:border-box;border:1px solid #000"></div>
<div class="a" style="left:522px;top:371px;width:200px;height:1px;background:#000;"></div>
<div class="t p" id="mle" style="left:522.500px;top:357px;width:198px;letter-spacing:-.6px;font-size:10.500px">MLE</div>
<div class="t p" id="edited" style="left:523px;top:373px;width:198px;color:#f00">Edited</div>
</body></html>
